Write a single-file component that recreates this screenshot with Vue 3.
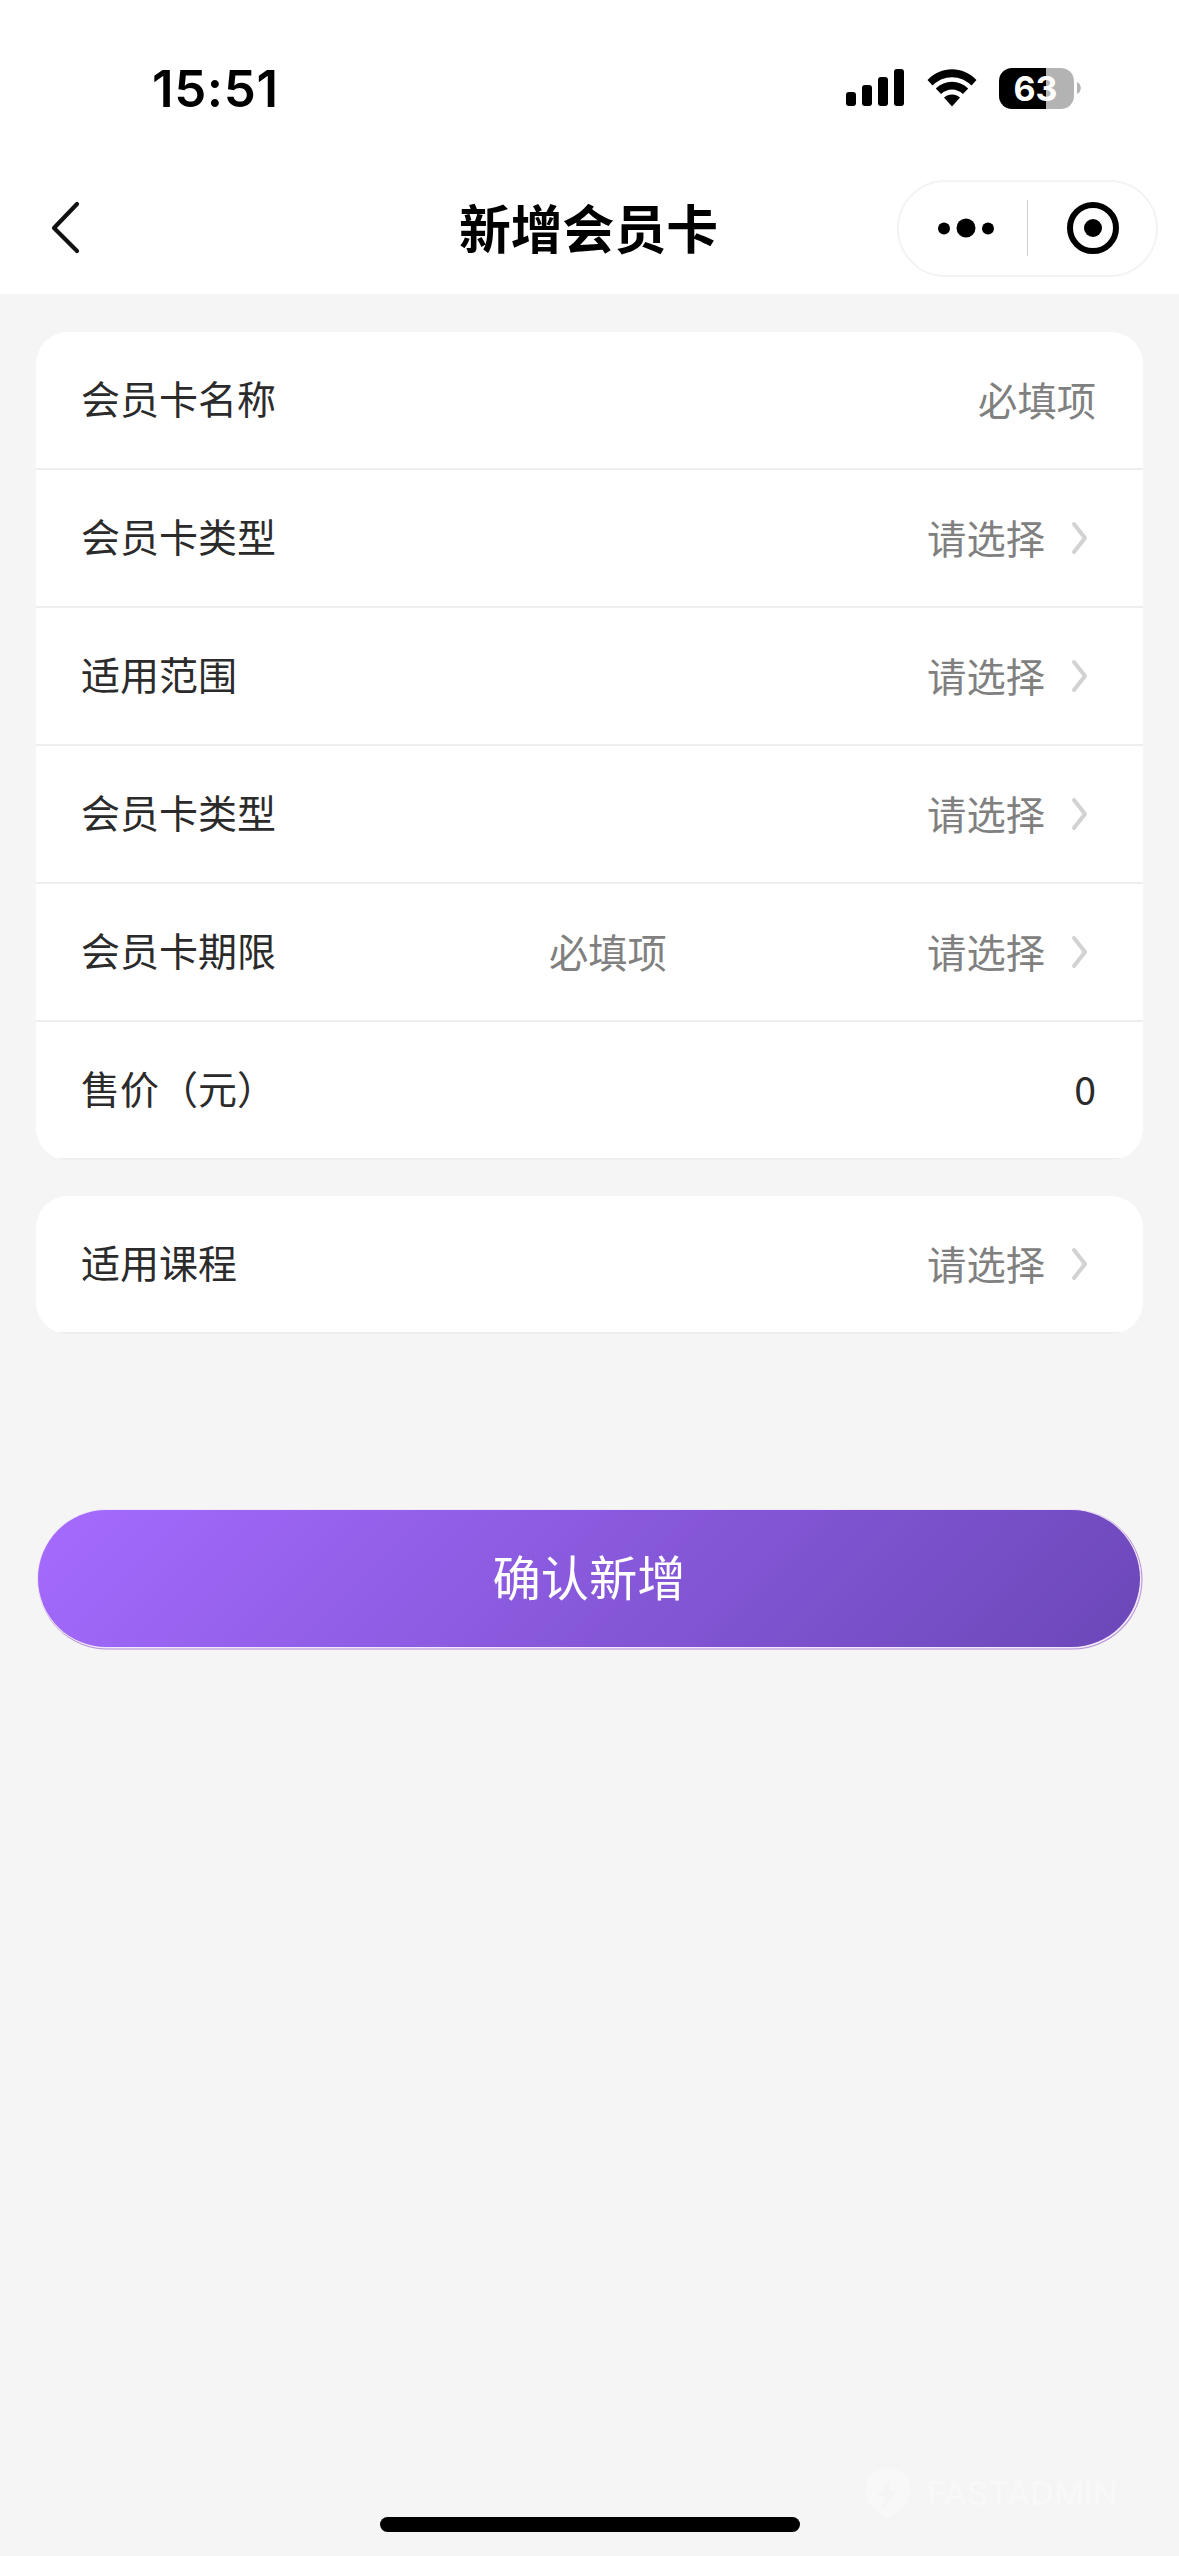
<template>
  <div class="page">
    <div class="status-bar">
      <span class="time">15:51</span>
      <div class="status-icons">
        <svg class="signal" width="58" height="38" viewBox="0 0 58 38">
          <rect x="0" y="23" width="10" height="14" rx="3" />
          <rect x="16" y="16" width="10" height="21" rx="3" />
          <rect x="32" y="8" width="10" height="29" rx="3" />
          <rect x="48" y="0" width="10" height="37" rx="3" />
        </svg>
        <svg class="wifi" width="50" height="38" viewBox="0 0 50 38">
          <path d="M0.5 11 C14 -3.5 36 -3.5 49.5 11 L44.5 16.5 C33.5 5.5 16.5 5.5 5.5 16.5 Z" />
          <path d="M8.8 19.5 C18 10.5 32 10.5 41.2 19.5 L36 25 C29.5 19 20.5 19 14 25 Z" />
          <path d="M17 28.5 C21.5 24.5 28.5 24.5 33 28.5 L25 37.5 Z" />
        </svg>
        <div class="battery">
          <span>63</span>
        </div>
        <svg class="battery-cap" width="4" height="12" viewBox="0 0 4 12">
          <path d="M0 0 C5 2 5 10 0 12 Z" fill="#b3b3b3" />
        </svg>
      </div>
    </div>

    <div class="nav-bar">
      <svg class="back" width="32" height="56" viewBox="0 0 32 56">
        <path d="M28 4 L5 28 L28 51" fill="none" stroke="#111" stroke-width="4.2" stroke-linecap="round" stroke-linejoin="round" />
      </svg>
      <h1>新增会员卡</h1>
      <div class="capsule">
        <svg width="56" height="20" viewBox="0 0 56 20">
          <circle cx="6" cy="10.5" r="6" />
          <circle cx="28" cy="10" r="9.5" />
          <circle cx="50" cy="10.5" r="6" />
        </svg>
        <i class="divider"></i>
        <svg width="52" height="52" viewBox="0 0 52 52">
          <circle cx="26" cy="26" r="23" fill="none" stroke="#000" stroke-width="6" />
          <circle cx="26" cy="26" r="9" />
        </svg>
      </div>
    </div>

    <div class="form">
      <div v-for="(group, i) in groups" :key="i" class="card">
        <div v-for="(row, j) in group" :key="j" class="row">
          <span class="label">{{ row.label }}</span>
          <span v-if="row.input" class="field">{{ row.input }}</span>
          <span class="value" :class="{ filled: row.filled }">{{ row.value }}</span>
          <svg v-if="row.link" class="arrow" width="17" height="34" viewBox="0 0 17 34">
            <path d="M3 3 L14 17 L3 31" fill="none" stroke="#d2d2d2" stroke-width="4" stroke-linecap="round" stroke-linejoin="round" />
          </svg>
        </div>
      </div>
    </div>

    <button class="submit-btn">确认新增</button>

    <div class="footer">
      <div class="home-indicator"></div>
      <div class="watermark">
        <svg width="46" height="50" viewBox="0 0 46 50">
          <path fill-rule="evenodd" d="M23 0 C37 0 45 9 45 22 C45 36 36 44 23 50 C9 44 1 36 1 22 C1 9 9 0 23 0 Z M27 10 L12 28 L20 28 L17 42 L33 22 L25 22 Z" fill="#f8f8f8" />
        </svg>
        <span>FASTADMIN</span>
      </div>
    </div>
  </div>
</template>

<script setup>
import { ref } from 'vue';

const groups = ref([
  [
    { label: '会员卡名称', value: '必填项' },
    { label: '会员卡类型', value: '请选择', link: true },
    { label: '适用范围', value: '请选择', link: true },
    { label: '会员卡类型', value: '请选择', link: true },
    { label: '会员卡期限', input: '必填项', value: '请选择', link: true },
    { label: '售价（元）', value: '0', filled: true }
  ],
  [
    { label: '适用课程', value: '请选择', link: true }
  ]
]);
</script>

<style>
body { margin: 0; background: #f5f5f5; }
</style>

<style scoped>
.page {
  display: flex; flex-direction: column;
  width: 1179px; height: 2556px; overflow: hidden;
  background: #f5f5f5;
  font-family: Inter, "Noto Sans CJK SC", sans-serif;
}

.status-bar {
  display: flex; justify-content: space-between; align-items: center;
  flex: none; box-sizing: border-box; height: 162px;
  padding: 14px 98px 0 152px;
  background: #fff;
}
.time { padding-top: 1px; font-size: 51px; font-weight: 600; line-height: 60px; letter-spacing: 0.6px; }
.status-icons { display: flex; align-items: center; }
.wifi { margin-left: 23px; }
.battery {
  display: flex; justify-content: center; align-items: center;
  box-sizing: border-box; width: 75px; height: 41px; margin-left: 22px; padding-right: 2px;
  border-radius: 13px;
  background: linear-gradient(90deg, #000 47px, #b3b3b3 47px);
  color: #fff; font-size: 34px; font-weight: 700;
}
.battery-cap { margin-left: 3px; }

.nav-bar {
  display: flex; align-items: center; justify-content: space-between;
  flex: none; box-sizing: border-box; height: 132px;
  padding: 0 21px 0 49px;
  background: #fff;
}
.nav-bar h1 {
  margin: 4px 0 0 378px; flex: 1;
  font-size: 51.8px; font-weight: 700; line-height: 60px;
}
.capsule {
  display: flex; align-items: center;
  box-sizing: border-box; width: 261px; height: 97px;
  padding: 0 0 0 39px;
  border: 2px solid #f3f3f3; border-radius: 49px;
}
.divider { flex: none; width: 1px; height: 56px; margin: 0 39px 0 33px; background: #ccc; }
.capsule svg { flex: none; }

.form { display: flex; flex-direction: column; gap: 36px; padding: 38px 36px 0; }
.card { border-radius: 32px; background: #fff; overflow: hidden; }
.row {
  display: flex; align-items: center;
  box-sizing: border-box; height: 138px;
  padding: 0 47px 0 45px;
  border-bottom: 2px solid #eee;
  font-size: 39.3px; line-height: 56px; color: #808080;
}
.label { width: 468px; color: #2b2b2b; font-size: 39px; }
.value { margin-left: auto; padding-top: 4px; }
.value.filled { padding: 0 0 5px; color: #2b2b2b; font-family: "Noto Sans CJK SC", sans-serif; }
.field { padding-top: 4px; }
.arrow { margin: 0 8px 0 26px; }

/* thin light ring inside a purple hairline, heavier on the bottom right */
.submit-btn {
  flex: none;
  width: 1102px; height: 137px; margin: 176px 0 0 38px; padding: 0;
  border: none; border-radius: 69px;
  background: linear-gradient(135deg, #a56bff, #6b47b8);
  box-shadow: 0 0 0 1px #f3e8fb, 1px 1px 0 0.5px #f3e8fb, 1px 1px 0 1.5px #b48fd6;
  color: #fff; font-family: inherit; font-size: 48.3px; line-height: 60px;
}

.footer {
  position: relative;
  display: flex; justify-content: center;
  margin-top: auto; padding-bottom: 24px;
}
.home-indicator { width: 420px; height: 15px; border-radius: 8px; background: #000; }
.watermark {
  position: absolute; right: 61px; bottom: 38px;
  display: flex; align-items: center; gap: 16px;
  color: #f8f8f8; font-size: 33px; font-weight: 500;
}
</style>
